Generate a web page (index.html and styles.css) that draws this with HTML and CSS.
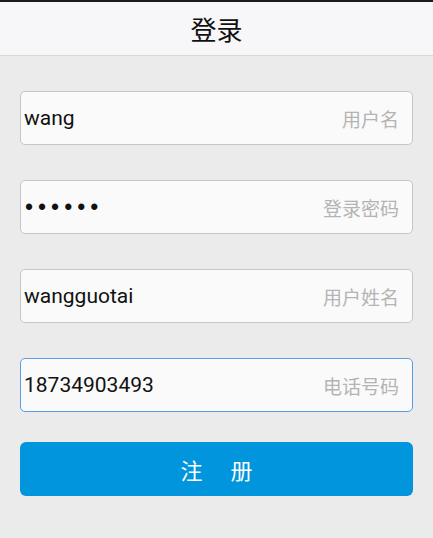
FILE: index.html
```html
<!DOCTYPE html>
<html lang="zh">
<head>
<meta charset="utf-8">
<link rel="stylesheet" href="styles.css">
</head>
<body>
<div class="app">
  <header class="topbar">
    <h1 class="title">登录</h1>
  </header>
  <form class="form">
    <div class="field">
      <span class="value">wang</span>
      <span class="hint">用户名</span>
    </div>
    <div class="field">
      <span class="value dots">••••••</span>
      <span class="hint">登录密码</span>
    </div>
    <div class="field">
      <span class="value">wangguotai</span>
      <span class="hint">用户姓名</span>
    </div>
    <div class="field focused">
      <span class="value">18734903493</span>
      <span class="hint">电话号码</span>
    </div>
    <button type="button" class="submit">注　册</button>
  </form>
</div>
</body>
</html>
```
FILE: styles.css
```css
* { box-sizing: border-box; }
html, body { margin: 0; padding: 0; }
body {
  width: 433px;
  height: 538px;
  background: #ebebeb;
  font-family: Roboto, "Noto Sans CJK SC", sans-serif;
  overflow: hidden;
}
.app { display: flex; flex-direction: column; }
.topbar {
  height: 56px;
  background: #f7f6f8;
  border-top: 2px solid #1c1c1c;
  border-bottom: 1px solid #d8d8d8;
  display: flex;
  align-items: center;
  justify-content: center;
}
.title {
  margin: 0;
  font-size: 26px;
  font-weight: 400;
  color: #111;
  font-family: "Noto Sans CJK SC", sans-serif;
  line-height: 1;
  padding-top: 1px;
}
.form {
  display: flex;
  flex-direction: column;
  gap: 35px;
  padding: 35px 20px 0 20px;
}
.field {
  height: 54px;
  background: #fafafa;
  border: 1px solid #c6c6c6;
  border-radius: 5px;
  display: flex;
  align-items: center;
  justify-content: space-between;
  padding: 0 13px 0 3px;
}
.field.focused { border-color: #5a9cec; }
.value {
  font-size: 21px;
  color: #111;
  font-family: Roboto, sans-serif;
}
.dots {
  font-family: "Liberation Sans", sans-serif;
  font-size: 23px;
  letter-spacing: 5px;
  line-height: 1;
  padding-left: 1px;
  margin-top: 1px;
}
.hint {
  font-size: 19px;
  color: #b4b4b4;
  font-family: "Noto Sans CJK SC", sans-serif;
}
.submit {
  height: 54px;
  margin-top: -5px;
  border: none;
  border-radius: 6px;
  background: #0095dc;
  color: #fff;
  font-size: 22px;
  letter-spacing: 3px;
  font-family: "Noto Sans CJK SC", sans-serif;
  padding: 0 0 0 3px;
}
```
